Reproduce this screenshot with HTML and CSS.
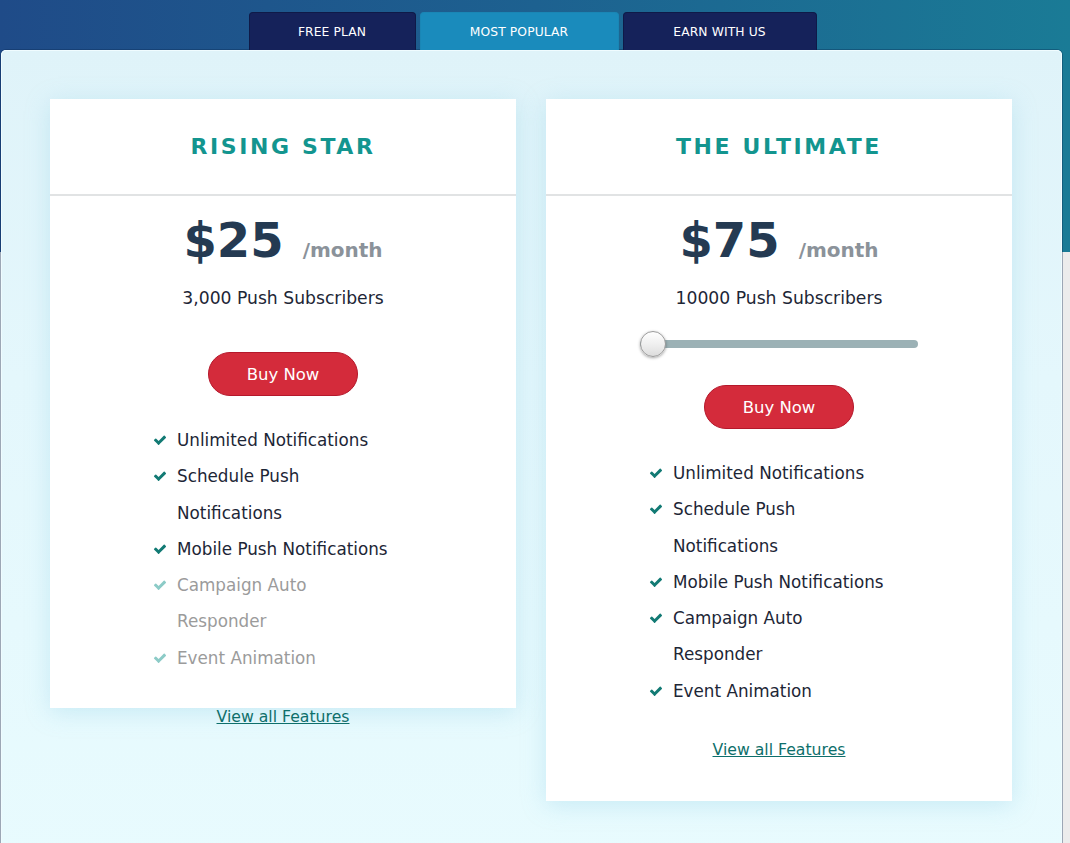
FILE: index.html
```html
<!DOCTYPE html>
<html lang="en">
<head>
<meta charset="utf-8">
<title>Pricing</title>
<link rel="stylesheet" href="styles.css">
</head>
<body>
<div class="page">
  <nav class="tabs">
    <a class="tab tab-free" href="#">FREE PLAN</a>
    <a class="tab tab-active" href="#">MOST POPULAR</a>
    <a class="tab tab-earn" href="#">EARN WITH US</a>
  </nav>
  <main class="panel">
    <section class="card card-short">
      <header class="card-head"><h2 class="card-title">RISING STAR</h2></header>
      <div class="price"><span class="amount">$25</span><span class="per">/month</span></div>
      <p class="subs">3,000 Push Subscribers</p>
      <a class="buy" href="#">Buy Now</a>
      <ul class="features">
        <li class="feat"><svg class="check" viewBox="0 0 1792 1792"><path d="M1671 566q0 40-28 68l-724 724-136 136q-28 28-68 28t-68-28l-136-136-362-362q-28-28-28-68t28-68l136-136q28-28 68-28t68 28l294 295 656-657q28-28 68-28t68 28l136 136q28 28 28 68z"/></svg><span>Unlimited Notifications</span></li>
        <li class="feat"><svg class="check" viewBox="0 0 1792 1792"><path d="M1671 566q0 40-28 68l-724 724-136 136q-28 28-68 28t-68-28l-136-136-362-362q-28-28-28-68t28-68l136-136q28-28 68-28t68 28l294 295 656-657q28-28 68-28t68 28l136 136q28 28 28 68z"/></svg><span>Schedule Push Notifications</span></li>
        <li class="feat"><svg class="check" viewBox="0 0 1792 1792"><path d="M1671 566q0 40-28 68l-724 724-136 136q-28 28-68 28t-68-28l-136-136-362-362q-28-28-28-68t28-68l136-136q28-28 68-28t68 28l294 295 656-657q28-28 68-28t68 28l136 136q28 28 28 68z"/></svg><span>Mobile Push Notifications</span></li>
        <li class="feat feat-off"><svg class="check" viewBox="0 0 1792 1792"><path d="M1671 566q0 40-28 68l-724 724-136 136q-28 28-68 28t-68-28l-136-136-362-362q-28-28-28-68t28-68l136-136q28-28 68-28t68 28l294 295 656-657q28-28 68-28t68 28l136 136q28 28 28 68z"/></svg><span>Campaign Auto Responder</span></li>
        <li class="feat feat-off"><svg class="check" viewBox="0 0 1792 1792"><path d="M1671 566q0 40-28 68l-724 724-136 136q-28 28-68 28t-68-28l-136-136-362-362q-28-28-28-68t28-68l136-136q28-28 68-28t68 28l294 295 656-657q28-28 68-28t68 28l136 136q28 28 28 68z"/></svg><span>Event Animation</span></li>
      </ul>
      <a class="all" href="#">View all Features</a>
    </section>
    <section class="card">
      <header class="card-head"><h2 class="card-title">THE ULTIMATE</h2></header>
      <div class="price"><span class="amount">$75</span><span class="per">/month</span></div>
      <p class="subs">10000 Push Subscribers</p>
      <div class="slider"><span class="thumb"></span></div>
      <a class="buy buy-after-slider" href="#">Buy Now</a>
      <ul class="features">
        <li class="feat"><svg class="check" viewBox="0 0 1792 1792"><path d="M1671 566q0 40-28 68l-724 724-136 136q-28 28-68 28t-68-28l-136-136-362-362q-28-28-28-68t28-68l136-136q28-28 68-28t68 28l294 295 656-657q28-28 68-28t68 28l136 136q28 28 28 68z"/></svg><span>Unlimited Notifications</span></li>
        <li class="feat"><svg class="check" viewBox="0 0 1792 1792"><path d="M1671 566q0 40-28 68l-724 724-136 136q-28 28-68 28t-68-28l-136-136-362-362q-28-28-28-68t28-68l136-136q28-28 68-28t68 28l294 295 656-657q28-28 68-28t68 28l136 136q28 28 28 68z"/></svg><span>Schedule Push Notifications</span></li>
        <li class="feat"><svg class="check" viewBox="0 0 1792 1792"><path d="M1671 566q0 40-28 68l-724 724-136 136q-28 28-68 28t-68-28l-136-136-362-362q-28-28-28-68t28-68l136-136q28-28 68-28t68 28l294 295 656-657q28-28 68-28t68 28l136 136q28 28 28 68z"/></svg><span>Mobile Push Notifications</span></li>
        <li class="feat"><svg class="check" viewBox="0 0 1792 1792"><path d="M1671 566q0 40-28 68l-724 724-136 136q-28 28-68 28t-68-28l-136-136-362-362q-28-28-28-68t28-68l136-136q28-28 68-28t68 28l294 295 656-657q28-28 68-28t68 28l136 136q28 28 28 68z"/></svg><span>Campaign Auto Responder</span></li>
        <li class="feat"><svg class="check" viewBox="0 0 1792 1792"><path d="M1671 566q0 40-28 68l-724 724-136 136q-28 28-68 28t-68-28l-136-136-362-362q-28-28-28-68t28-68l136-136q28-28 68-28t68 28l294 295 656-657q28-28 68-28t68 28l136 136q28 28 28 68z"/></svg><span>Event Animation</span></li>
      </ul>
      <a class="all" href="#">View all Features</a>
    </section>
  </main>
</div>
</body>
</html>
```
FILE: styles.css
```css
* { box-sizing: border-box; }
html, body { margin: 0; padding: 0; }
body {
  font-family: "DejaVu Sans", sans-serif;
  color: #1d2b3b;
  background: linear-gradient(90deg, #1f4b88 0%, #1d6190 50%, #1a7b96 100%) top left / 100% 252px no-repeat, #ececec;
  overflow: hidden;
}
.page {
  width: 1062px;
  padding-left: 1px;
}
.tabs {
  display: flex;
  justify-content: center;
  gap: 4px;
  padding-top: 12px;
  padding-left: 2px;
}
.tab {
  display: flex;
  align-items: center;
  justify-content: center;
  height: 38px;
  background: #15225a;
  border: 1px solid #0f1a48;
  border-bottom: none;
  border-radius: 4px 4px 0 0;
  color: #fff;
  font-size: 12.3px;
  white-space: nowrap;
  text-decoration: none;
  letter-spacing: 0.1px;
}
.tab-free { width: 167px; }
.tab-active { width: 199px; }
.tab-earn { width: 194px; }
.tab-active {
  background: #1a8bbc;
  border-color: #1a86b5;
}
.panel {
  display: flex;
  align-items: flex-start;
  gap: 30px;
  padding: 49px 49px 60px;
  min-height: 820px;
  background: linear-gradient(180deg, #dff3f9 0%, #e4f7fc 40%, #e8fbfe 100%);
  border-radius: 5px 5px 0 0;
  box-shadow: 0 0 0 1px rgba(10, 40, 80, 0.35), inset 0 0 0 1px #f0fcff;
}
.card {
  width: 466px;
  display: flex;
  flex-direction: column;
  align-items: center;
  background: #fff;
  padding-bottom: 41px;
  box-shadow: 0 4px 22px rgba(140, 205, 230, 0.35);
}
.card > * {
  flex-shrink: 0;
}
.card-short {
  height: 609px;
}
.card-head {
  align-self: stretch;
  height: 97px;
  display: flex;
  align-items: center;
  justify-content: center;
  border-bottom: 2px solid #e1e3e4;
}
.card-title {
  margin: 0;
  font-size: 22px;
  font-weight: bold;
  letter-spacing: 2.6px;
  color: #13958f;
}
.price {
  margin-top: 20px;
  display: flex;
  align-items: baseline;
  gap: 19px;
  line-height: 48px;
}
.amount {
  font-size: 48px;
  font-weight: bold;
  color: #243a52;
}
.per {
  font-size: 20px;
  font-weight: bold;
  color: #8b929a;
}
.subs {
  margin: 14px 0 0;
  font-size: 17.2px;
  line-height: 20px;
  color: #1d2636;
}
.slider {
  position: relative;
  width: 278px;
  height: 26px;
  margin-top: 23px;
  display: flex;
  align-items: center;
}
.slider::before {
  content: "";
  display: block;
  width: 100%;
  height: 8px;
  border-radius: 4px;
  background: #9bb1b5;
}
.thumb {
  position: absolute;
  left: 0;
  top: 0;
  width: 26px;
  height: 26px;
  border-radius: 50%;
  background: linear-gradient(180deg, #ffffff 0%, #ececec 60%, #dcdcdc 100%);
  border: 1px solid #9a9a9a;
  box-shadow: 0 1px 3px rgba(0, 0, 0, 0.35);
}
.buy {
  margin-top: 44px;
  width: 150px;
  height: 44px;
  display: flex;
  align-items: center;
  justify-content: center;
  border-radius: 22px;
  background: #d42b3b;
  border: 1px solid #b5182b;
  color: #fff;
  font-size: 16.5px;
  text-decoration: none;
}
.buy-after-slider {
  margin-top: 28px;
}
.features {
  list-style: none;
  margin: 26px 0 0;
  padding: 0 20px 0 0;
  width: 260px;
}
.feat {
  display: flex;
  align-items: flex-start;
  gap: 10px;
  font-size: 16.8px;
  line-height: 36.3px;
  color: #1d2636;
}
.check {
  flex: none;
  width: 14px;
  height: 14px;
  margin-top: 11px;
  fill: #127a74;
}
.feat-off { color: #9b9b9b; }
.feat-off .check { fill: #8ccbc7; }
.all {
  margin-top: 31px;
  font-size: 15.7px;
  line-height: 20px;
  color: #0e6f6b;
  text-decoration: underline;
}
```
